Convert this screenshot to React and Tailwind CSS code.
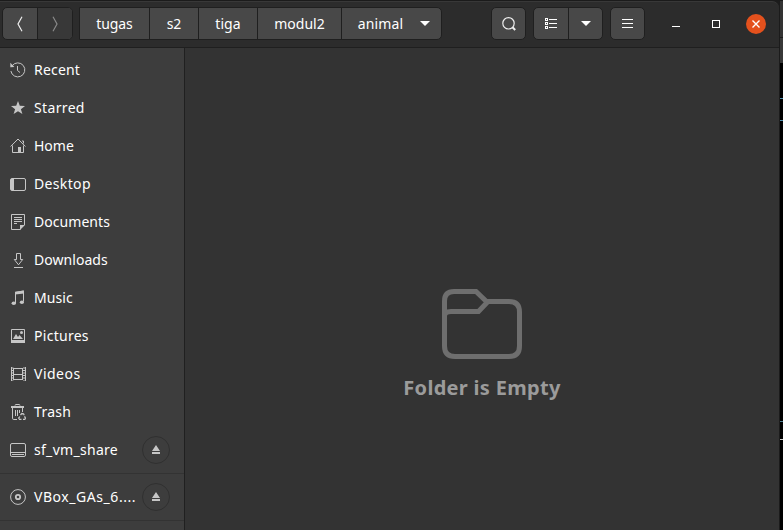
import React from "react";

const Icon = ({ children, size = 16 }) => (
  <svg width={size} height={size} viewBox="0 0 16 16" fill="none" stroke="#c6c6c6" strokeWidth="1" className="shrink-0">
    {children}
  </svg>
);

const icons = {
  recent: (
    <>
      <path d="M2.2 3.7A7 7 0 1 1 .9 9" />
      <path d="M.3 5.2V.8l4.1 4.1z" fill="#c6c6c6" stroke="none" />
      <path d="M7.5 4v4.5l2.5 2" />
    </>
  ),
  star: <path d="M8 1l1.8 4.8 5.2.2-4.1 3.2L12.400 14 8 11.200 3.600 14l1.500-4.800L1 6l5.200-.2z" fill="#c6c6c6" stroke="none" />,
  home: (
    <>
      <path d="M.6 8.500L8 1l7.400 7.500M2.500 7.500v7h11v-7M13.500 5.500V3H12" />
      <path d="M8 9h3v5H8z" fill="#c6c6c6" stroke="none" />
    </>
  ),
  desktop: (
    <>
      <rect x=".5" y="2.500" width="15" height="12" rx="1.500" />
      <path d="M1 3h3v11H1z" fill="#c6c6c6" stroke="none" />
    </>
  ),
  documents: (
    <>
      <path d="M10.500 15.500h-9v-15h13V11M4 3.500h8M4 5.500h8M4 7.500h8M4 9.500h3" />
      <path d="M10 16v-5h5z" fill="#c6c6c6" stroke="none" />
    </>
  ),
  downloads: <path d="M6.500 1.500h4v6h2.200L8.500 12.800 4.300 7.500h2.200zM4 15.500h9" />,
  music: (
    <>
      <path d="M5.500 13V2.500l8-1.500v10.500" />
      <path d="M5 1.800L14 .5v3L5 4.500z" fill="#c6c6c6" stroke="none" />
      <ellipse cx="3.800" cy="13.200" rx="2.200" ry="1.800" fill="#c6c6c6" stroke="none" />
      <ellipse cx="11.900" cy="12.200" rx="2.100" ry="1.800" fill="#c6c6c6" stroke="none" />
    </>
  ),
  pictures: (
    <>
      <path d="M1.500 1.500h13v12h-13z" />
      <path d="M1 12h14v3H1zM3 11l3-5 2 3 1.500-2L13 11z" fill="#c6c6c6" stroke="none" />
      <circle cx="11.500" cy="4.500" r="1.500" fill="#c6c6c6" stroke="none" />
    </>
  ),
  videos: (
    <>
      <path d="M4 2.500h9M4 8.500h9M4 13.500h9M3.500 2v12M12.500 2v12" />
      <path d="M1.500 1v14M15.500 1v14" />
      <path d="M2.500 1.500v13M14 1.500v13" strokeWidth="2" strokeDasharray="1 1.500" />
    </>
  ),
  trash: (
    <>
      <path d="M5 1.500Q5 .5 6 .5h3Q10 .5 10 1.500M2.500 4v10.200q0 1.300 1.300 1.300H7M12.500 4v4M5.500 6v6M7.500 6v6M9.500 6v3" />
      <path d="M1 2h13v2H1z" fill="#c6c6c6" stroke="none" />
      <path d="M10.500 11l1.300-1.500 1.700.3.700 1.400M9.800 12.500l-1.100 1.600.8 1.200h2M13 15.300h1.800l.7-1.200-1-1.700" strokeWidth="1.300" />
    </>
  ),
  drive: <path d="M2 1.500h12q1.500 0 1.500 1.500v10q0 1.500-1.500 1.500H2Q.5 14.500.5 13V3Q.5 1.500 2 1.500zM1 10.500h14M2 12.500h12" />,
  disc: (
    <>
      <circle cx="8" cy="8" r="7.400" />
      <circle cx="8" cy="8" r="2.200" strokeWidth="1.800" />
    </>
  ),
};

const places = [
  ["recent", "Recent", "tracking-[0.2px]"],
  ["star", "Starred", "tracking-[0.35px]"],
  ["home", "Home", "tracking-[0px]"],
  ["desktop", "Desktop", "tracking-[0.35px]"],
  ["documents", "Documents", "tracking-[0.05px]"],
  ["downloads", "Downloads", "tracking-[0.05px]"],
  ["music", "Music", "tracking-[0.1px]"],
  ["pictures", "Pictures", "tracking-[0.28px]"],
  ["videos", "Videos", "tracking-[0.5px]"],
  ["trash", "Trash", "tracking-[0.3px]"],
];

function Place({ icon, label, tracking, eject }) {
  return (
    <div className="flex h-[38px] items-center pl-[10px] pr-[14px]">
      <Icon>{icons[icon]}</Icon>
      <span className={`ml-2 flex-1 whitespace-nowrap leading-5 ${tracking}`}>{label}</span>
      {eject && (
        <button className="flex size-7 shrink-0 items-center justify-center rounded-full border border-[#303030]">
          <svg width="8" height="10" viewBox="0 0 8 10" fill="#c6c6c6">
            <path d="M4 0l4 6H0zM0 7h8v2H0z" />
          </svg>
        </button>
      )}
    </div>
  );
}

const crumbs = [
  ["tugas", "w-[70px]", "tracking-[-0.1px]"],
  ["s2", "w-[49px]", "tracking-[0px]"],
  ["tiga", "w-[59px]", "tracking-[0.1px]"],
  ["modul2", "w-[84px]", "tracking-[0px]"],
];

const group = "flex h-[33px] rounded-[5px] border border-[#1f1f1f] bg-[#484848] overflow-hidden";
const cell = "flex items-center justify-center";

const Caret = () => (
  <svg width="10" height="5" viewBox="0 0 10 5" fill="#fff" className="shrink-0">
    <path d="M0 0h10L5 5z" />
  </svg>
);

function Header() {
  return (
    <header className="flex h-[47px] items-start rounded-tr-[7px] border-b border-t border-b-[#1f1f1f] border-t-[#383838] bg-[#2c2c2c] pl-[2px] pt-[5px] text-white">
      <div className={`${group} w-[71px]`}>
        <button className={`${cell} w-[35px] border-r border-[#1f1f1f]`}>
          <svg width="6" height="16" viewBox="0 0 6 16" fill="none" stroke="#eee" strokeWidth="1.200"><path d="M5 .8L1 8l4 7.200" /></svg>
        </button>
        <button className={`${cell} flex-1 bg-[#383838]`}>
          <svg width="6" height="16" viewBox="0 0 6 16" fill="none" stroke="#8a8a8a" strokeWidth="1.200"><path d="M1 .8L5 8l-4 7.200" /></svg>
        </button>
      </div>
      <nav className={`${group} ml-[6px] w-[363px] rounded-l-none`}>
        {crumbs.map(([label, width, tracking]) => (
          <button key={label} className={`${cell} shrink-0 border-r border-[#1f1f1f] ${width} ${tracking}`}>{label}</button>
        ))}
        <button className={`${cell} flex-1 gap-[17px] pl-[5px]`}>
          <span className="tracking-[0.15px]">animal</span>
          <Caret />
        </button>
      </nav>
      <div className={`${group} ml-[49px] w-[35px]`}>
        <button className={`${cell} flex-1`}>
          <svg width="16" height="16" viewBox="0 0 16 16" fill="none" stroke="#eee"><circle cx="7.500" cy="7.300" r="5.700" strokeWidth="1.200" /><path d="M11.500 11.300l2.700 2.700" strokeWidth="2" /></svg>
        </button>
      </div>
      <div className={`${group} ml-[7px] w-[70px]`}>
        <button className={`${cell} w-[35px] border-r border-[#1f1f1f]`}>
          <svg width="12" height="12" viewBox="0 0 12 12" fill="none" stroke="#fff" shapeRendering="crispEdges">
            <path d="M4 1.500h8M4 5.500h8M4 9.500h8M.5.500h2v2h-2zM.5 4.500h2v2h-2zM.5 8.500h2v2h-2z" />
          </svg>
        </button>
        <button className={`${cell} flex-1`}><Caret /></button>
      </div>
      <div className={`${group} ml-[7px] w-[35px]`}>
        <button className={`${cell} flex-1`}>
          <svg width="11" height="10" viewBox="0 0 11 10" stroke="#fff" shapeRendering="crispEdges"><path d="M0 .5h11M0 4.500h11M0 8.500h11" /></svg>
        </button>
      </div>
      <div className="ml-[27px] mt-[6px] flex items-center">
        <button className="flex h-5 w-2 items-center pt-[5px]"><span className="h-px w-2 bg-white" /></button>
        <button className="ml-8 mt-px size-2 border border-white" />
        <button className={`${cell} ml-[26px] mt-px size-5 rounded-full bg-[#e4511d]`}>
          <svg width="8" height="8" viewBox="0 0 8 8" stroke="#fff" strokeWidth="1.400"><path d="M.5.500l7 7M7.500.500l-7 7" /></svg>
        </button>
      </div>
    </header>
  );
}

export default function App() {
  return (
    <div className="flex h-[530px] w-[783px] overflow-hidden bg-[#1c1c1c] text-[14px] text-white [font-family:'Noto_Sans',sans-serif]">
      <div className="flex w-[780px] flex-col border-r border-t border-[#1b1b1b]">
        <Header />
        <div className="flex flex-1">
          <aside className="w-[185px] border-r border-[#202020] bg-[#3d3d3d] pt-[3px]">
            {places.map(([icon, label, tracking]) => (
              <Place key={icon} icon={icon} label={label} tracking={tracking} />
            ))}
            <Place icon="drive" label="sf_vm_share" tracking="tracking-[0.3px]" eject />
            <div className="my-1 h-px bg-[#333]" />
            <Place icon="disc" label="VBox_GAs_6...." tracking="tracking-[0.55px]" eject />
            <div className="my-1 h-px bg-[#333]" />
          </aside>
          <main className="flex flex-1 flex-col items-center bg-[#333] pt-[241px]">
            <svg width="80" height="70" viewBox="0 0 80 70" fill="none" stroke="#6e6e6e" strokeWidth="5">
              <path d="M2.500 27V12Q2.500 2.500 12 2.500h22L44.500 12.500H67Q77.500 12.500 77.500 23v34Q77.500 67.500 67 67.500H13Q2.500 67.500 2.500 57V27Q2.500 22.500 9 22.500h27.500L45.500 13" />
            </svg>
            <p className="mt-[13px] whitespace-nowrap text-[20px] font-bold leading-8 tracking-[0.3px] text-[#9b9b9b]">Folder is Empty</p>
          </main>
        </div>
      </div>
      <div className="flex w-[3px] flex-col bg-black">
        <div className="h-[38px] border-b border-t border-[#1b1b1b] bg-[#333]" />
        <div className="h-[25px] bg-[#383838]" />
        <div className="mt-[35px] h-px bg-[#4f8fae]" />
        <div className="mt-[21px] h-px bg-[#4f8fae]" />
        <div className="mt-[300px] h-px bg-[#4f7f92]" />
        <div className="mt-[17px] h-px bg-[#ccc]" />
      </div>
    </div>
  );
}
